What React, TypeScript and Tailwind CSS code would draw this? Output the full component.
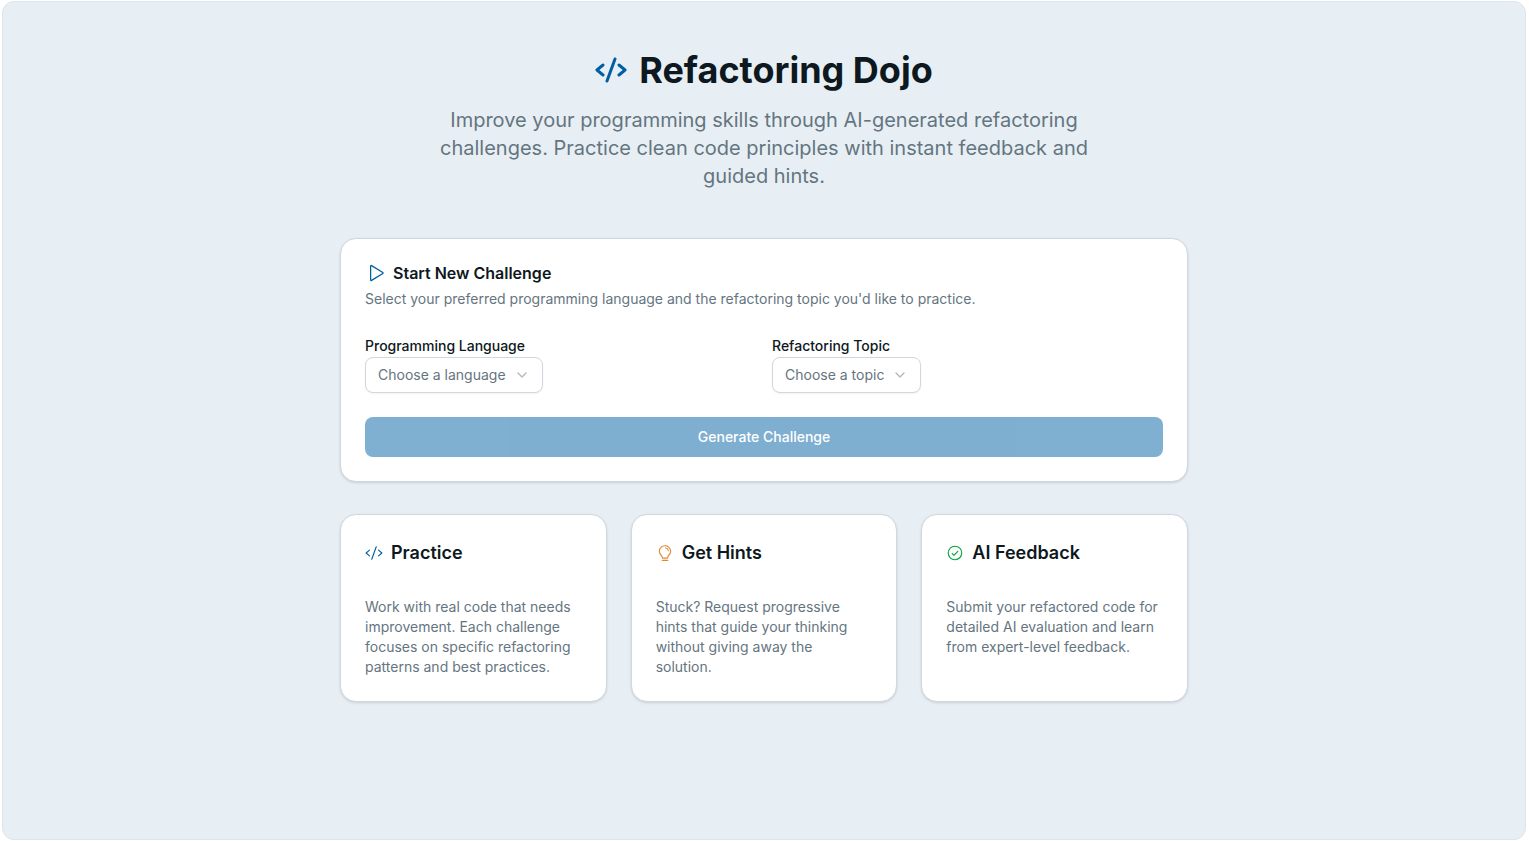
import { FormEvent, ReactNode, useState } from 'react'
import { ChevronDown } from 'lucide-react'
import { PiCheckCircle, PiCode, PiCodeBold, PiLightbulb, PiPlay } from 'react-icons/pi'

const LANGUAGES = ['JavaScript', 'TypeScript', 'Python', 'Java', 'C#', 'Go']
const TOPICS = ['Extract Method', 'Naming', 'Dead Code', 'Long Functions']

const FEATURES = [
  {
    title: 'Practice',
    icon: <PiCode className="size-[18px] text-[#005fa3]" />,
    text: 'Work with real code that needs improvement. Each challenge focuses on specific refactoring patterns and best practices.',
  },
  {
    title: 'Get Hints',
    icon: <PiLightbulb className="size-[18px] text-[#e08a35]" />,
    text: 'Stuck? Request progressive hints that guide your thinking without giving away the solution.',
  },
  {
    title: 'AI Feedback',
    icon: <PiCheckCircle className="size-[18px] text-[#00a63e]" />,
    text: 'Submit your refactored code for detailed AI evaluation and learn from expert-level feedback.',
  },
]

function Card({ children }: { children: ReactNode }) {
  return (
    <div className="rounded-2xl border border-[#d0d7de] bg-white p-6 shadow-sm">
      {children}
    </div>
  )
}

type PickerProps = {
  id: string
  label: string
  placeholder: string
  options: string[]
  value: string
  onChange: (value: string) => void
}

function Picker({ id, label, placeholder, options, value, onChange }: PickerProps) {
  return (
    <div>
      <div>
        <label htmlFor={id} className="text-sm font-medium">
          {label}
        </label>
      </div>
      <div className="relative w-fit">
        <select
          id={id}
          value={value}
          onChange={e => onChange(e.target.value)}
          className="block h-9 appearance-none field-sizing-content rounded-lg border border-[#d0d7de] bg-white pl-3 pr-9 text-sm text-[#65757f] shadow-xs"
        >
          <option value="">{placeholder}</option>
          {options.map(o => (
            <option key={o}>{o}</option>
          ))}
        </select>
        <ChevronDown className="pointer-events-none absolute right-[13px] top-2.5 size-4 text-[#65757f] opacity-50" />
      </div>
    </div>
  )
}

export default function App() {
  const [language, setLanguage] = useState('')
  const [topic, setTopic] = useState('')

  const handleSubmit = (e: FormEvent) => {
    e.preventDefault()
  }

  return (
    <div className="flex min-h-screen bg-white py-px pl-0.5 pr-[3px] font-['Inter',sans-serif] text-[#0d1820]">
      <div className="flex-1 rounded-xl border border-[#dde4ea] bg-[#e7eff5]">
        <main className="mx-auto max-w-4xl px-6 py-12">
          {/* Header */}
          <header className="mb-12 text-center">
            <div className="mb-4 flex items-center justify-center gap-3">
              <PiCodeBold className="size-8 text-[#005fa3]" />
              <h1 className="text-4xl font-bold">Refactoring Dojo</h1>
            </div>
            <p className="mx-auto max-w-2xl text-xl text-[#65757f]">
              Improve your programming skills through AI-generated refactoring challenges. Practice
              clean code principles with instant feedback and guided hints.
            </p>
          </header>

          {/* Challenge form */}
          <Card>
            <h2 className="flex items-center gap-2 text-base/5 font-semibold">
              <PiPlay className="size-5 text-[#005fa3]" />
              Start New Challenge
            </h2>
            <p className="mt-1.5 text-sm text-[#65757f]">
              Select your preferred programming language and the refactoring topic you'd like to
              practice.
            </p>
            <form onSubmit={handleSubmit} className="mt-6 flex flex-col gap-6">
              <div className="grid gap-4 md:grid-cols-2">
                <Picker
                  id="language"
                  label="Programming Language"
                  placeholder="Choose a language"
                  options={LANGUAGES}
                  value={language}
                  onChange={setLanguage}
                />
                <Picker
                  id="topic"
                  label="Refactoring Topic"
                  placeholder="Choose a topic"
                  options={TOPICS}
                  value={topic}
                  onChange={setTopic}
                />
              </div>
              <button
                type="submit"
                disabled={!language || !topic}
                className="h-10 rounded-lg bg-[#005fa3] text-sm font-medium text-white disabled:opacity-50"
              >
                Generate Challenge
              </button>
            </form>
          </Card>

          {/* Features */}
          <div className="mt-8 grid gap-6 md:grid-cols-3">
            {FEATURES.map(f => (
              <Card key={f.title}>
                <h3 className="flex items-center gap-2 text-lg font-semibold">
                  {f.icon}
                  {f.title}
                </h3>
                <p className="mt-[30px] text-sm text-[#65757f]">{f.text}</p>
              </Card>
            ))}
          </div>
        </main>
      </div>
    </div>
  )
}
